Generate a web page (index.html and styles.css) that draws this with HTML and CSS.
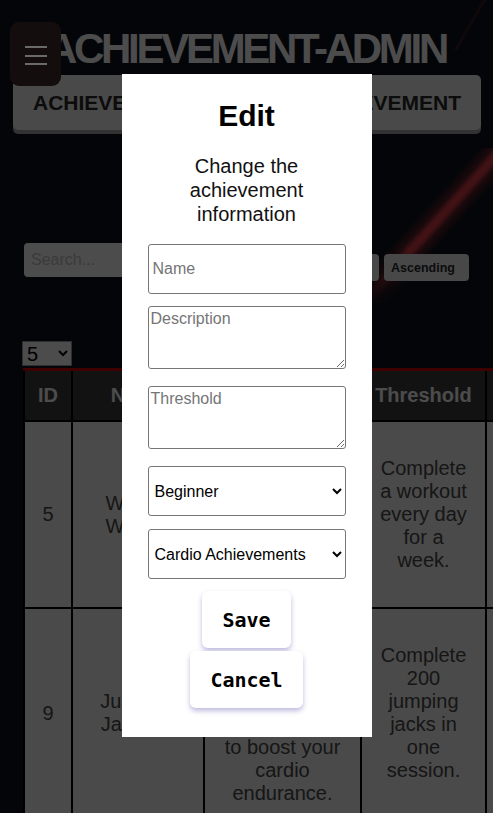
FILE: index.html
```html
<!DOCTYPE html>
<html lang="en">
<head>
<meta charset="utf-8">
<title>Achievement Admin</title>
<link rel="stylesheet" href="styles.css">
</head>
<body>
<button class="menu-toggle" type="button" aria-label="Menu"><span></span><span></span><span></span></button>
<main class="page">
  <h1 class="page-title">ACHIEVEMENT-ADMIN</h1>
  <nav class="tabs">
    <span class="tab">ACHIEVEMENTS</span>
    <span class="tab">ADD ACHIEVEMENT</span>
  </nav>
  <div class="controls">
    <input class="search" type="text" placeholder="Search...">
    <select class="sort-field"><option>Sort by Name</option></select>
    <button class="sort-order" type="button">Ascending</button>
  </div>
  <select class="page-size"><option>5</option><option>10</option><option>20</option></select>
  <div class="table-wrap">
    <table class="grid">
      <colgroup>
        <col class="col-id"><col class="col-name"><col class="col-desc"><col class="col-thr"><col class="col-level">
      </colgroup>
      <thead>
        <tr><th>ID</th><th>Name</th><th>Description</th><th>Threshold</th><th>Level</th></tr>
      </thead>
      <tbody>
        <tr>
          <td>5</td>
          <td>Weekly Warrior</td>
          <td>Complete a full workout every single day for one week straight to build consistency.</td>
          <td>Complete a workout every day for a week.</td>
          <td>Beginner</td>
        </tr>
        <tr>
          <td>9</td>
          <td>Jumping Jackstar</td>
          <td>Perform jumping jacks continuously throughout a long session to boost your cardio endurance.</td>
          <td>Complete 200 jumping jacks in one session.</td>
          <td>Beginner</td>
        </tr>
      </tbody>
    </table>
  </div>
</main>
<div class="overlay">
  <div class="modal">
    <h2 class="modal-title">Edit</h2>
    <p class="modal-text">Change the achievement information</p>
    <form class="modal-form">
      <input class="field field-input" type="text" placeholder="Name">
      <textarea class="field field-area field-first" placeholder="Description"></textarea>
      <textarea class="field field-area field-gap" placeholder="Threshold"></textarea>
      <select class="field field-select field-gap">
        <option>Beginner</option><option>Intermediate</option><option>Advanced</option>
      </select>
      <select class="field field-select field-gap-sm">
        <option>Cardio Achievements</option><option>Strength Achievements</option>
      </select>
      <button type="button" class="btn btn-save">Save</button>
      <button type="button" class="btn btn-cancel">Cancel</button>
    </form>
  </div>
</div>
</body>
</html>
```
FILE: styles.css
```css
* { box-sizing: border-box; }

html, body {
  margin: 0;
  height: 100%;
}

body {
  font-family: "Liberation Sans", Arial, sans-serif;
  overflow: hidden;
  background:
    linear-gradient(42deg, #10131c 0%, rgba(16, 19, 28, 0) 34%) 358px 148px / 150px 155px no-repeat,
    linear-gradient(132deg, rgba(200, 50, 60, 0) 42%, rgba(200, 50, 60, 0.4) 46.5%, rgba(225, 62, 72, 0.95) 49%, rgba(225, 62, 72, 0.95) 51%, rgba(200, 50, 60, 0.4) 53.5%, rgba(200, 50, 60, 0) 58%) 358px 148px / 150px 155px no-repeat,
    linear-gradient(120deg, rgba(255, 64, 80, 0) 47%, rgba(255, 64, 80, 0.2) 50%, rgba(255, 64, 80, 0) 53%) 440px 0 / 60px 50px no-repeat,
    #10131c;
}

/* menu toggle (sits above the modal backdrop) */
.menu-toggle {
  position: fixed;
  top: 22px;
  left: 10px;
  z-index: 20;
  width: 51px;
  height: 64px;
  padding: 3px 0 0;
  border: 0;
  border-radius: 9px;
  background: #140d0d;
  display: flex;
  flex-direction: column;
  align-items: center;
  justify-content: center;
  gap: 6.5px;
}
.menu-toggle span {
  display: block;
  width: 22px;
  height: 2px;
  background: #6a6a6a;
}

/* page */
.page {
  padding-top: 25px;
}

.page-title {
  margin: 0;
  text-align: center;
  color: #fff;
  font-size: 42px;
  font-weight: 700;
  line-height: 48px;
  letter-spacing: -3.3px;
}

.tabs {
  margin: 2px 12px 0 13px;
  height: 55px;
  padding: 0 20px;
  display: flex;
  justify-content: space-between;
  align-items: center;
  background: #f4f4f4;
  border-radius: 5px;
  box-shadow: 0 4px 0 #a8a8a8;
  color: #2a2a2a;
  font-size: 21px;
  font-weight: 700;
}

.controls {
  display: flex;
  align-items: flex-start;
  gap: 5px;
  margin: 113px 0 0 24px;
}

.search {
  width: 190px;
  height: 34px;
  padding: 0 7px;
  border: 0;
  border-radius: 4px;
  background: #fff;
  font: 16px "Liberation Sans", Arial, sans-serif;
}
.search::placeholder { color: #c4c4c4; }

.sort-field {
  appearance: none;
  margin-top: 11px;
  width: 160px;
  height: 27px;
  padding: 0 8px;
  border: 0;
  border-radius: 4px;
  background: #f2f2f2;
  color: #333;
  font: 700 12.5px "Liberation Sans", Arial, sans-serif;
}

.sort-order {
  margin-top: 11px;
  width: 85px;
  height: 27px;
  padding: 0 0 0 7px;
  border: 0;
  border-radius: 4px;
  background: #f2f2f2;
  color: #2a2a2a;
  text-align: left;
  font: 700 12.5px "Liberation Sans", Arial, sans-serif;
}

.page-size {
  display: block;
  margin: 60px 0 0 22px;
  width: 50px;
  height: 25px;
  border: 1px solid #999;
  border-radius: 0;
  background: #fff;
  color: #000;
  font: 20px "Liberation Sans", Arial, sans-serif;
}

.table-wrap {
  margin: 2px 0 0 23px;
  overflow: hidden;
}

.grid {
  border-collapse: collapse;
  table-layout: fixed;
  width: 614px;
  font-size: 20px;
}
.col-id { width: 48px; }
.col-name { width: 132px; }
.col-desc { width: 157px; }
.col-thr { width: 125px; }
.col-level { width: 152px; }

.grid th,
.grid td {
  border: 2px solid #000;
  padding: 13px;
  text-align: center;
  vertical-align: middle;
}
.grid th {
  background: #3d3d3d;
  color: #fff;
  border-top: 3px solid #d40000;
  font-weight: 700;
}
.grid td {
  padding-top: 12px;
  padding-bottom: 12px;
  background: #f7f7f7;
  color: #4a4a4a;
}

/* modal */
.overlay {
  position: fixed;
  inset: 0;
  z-index: 10;
  background: rgba(0, 0, 0, 0.7);
  display: flex;
  align-items: center;
  justify-content: center;
}

.modal {
  width: 250px;
  margin-bottom: 2px;
  padding: 25px 26px 29px;
  background: #fff;
  text-align: center;
  color: #000;
}

.modal-title {
  margin: 0;
  font-size: 30px;
  font-weight: 700;
  line-height: 34.5px;
}

.modal-text {
  margin: 20px 0 0;
  font-size: 20px;
  line-height: 24px;
  color: #111;
}

.modal-form {
  margin-top: 18.5px;
  display: flex;
  flex-direction: column;
  align-items: center;
}

.field {
  width: 198px;
  margin: 0;
  border: 1px solid #767676;
  border-radius: 3px;
  background: #fff;
  color: #000;
  font: 16px "Liberation Sans", Arial, sans-serif;
}
.field::placeholder { color: #757575; }

.field-input {
  height: 50px;
  padding: 0 4px;
}

.field-area {
  height: 63px;
  padding: 3px 2px;
  resize: vertical;
}

.field-select {
  height: 50px;
  padding: 0 2px;
}

.field-first { margin-top: 12px; }
.field-gap { margin-top: 17px; }
.field-gap-sm { margin-top: 13px; }

.btn {
  height: 57px;
  padding: 0 20px;
  border: 0;
  border-radius: 6px;
  background: #fff;
  color: #000;
  font: 700 20px "DejaVu Sans Mono", monospace;
  box-shadow: 0 3px 5px rgba(90, 80, 170, 0.38);
}
.btn-save { margin-top: 12px; }
.btn-cancel { margin-top: 3px; }
```
